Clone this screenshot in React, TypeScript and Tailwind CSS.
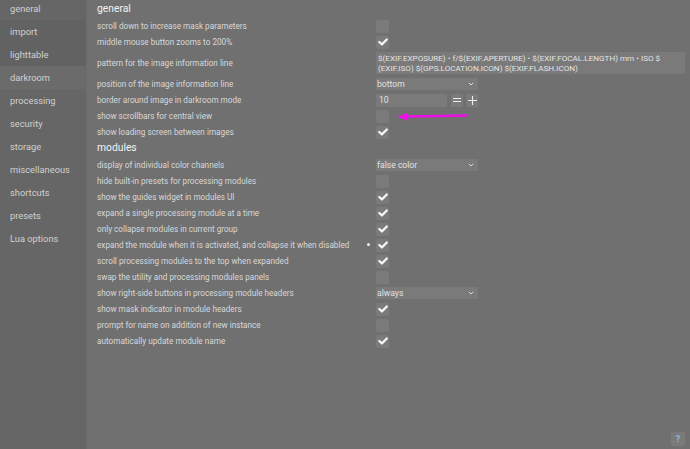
import React from "react";

const font = { fontFamily: "Roboto, 'Noto Sans', sans-serif" };

function Check({ on }: { on?: boolean }) {
  return (
    <div className="w-[13px] h-[13px] rounded-[2px] bg-[#7b7b7b] flex items-center justify-center">
      {on && (
        <svg width="10" height="8" viewBox="0 0 10 8">
          <path d="M1.3 4 L3.9 6.4 L8.8 1.5" stroke="#f6f6f6" strokeWidth="2.2" fill="none" strokeLinecap="round" strokeLinejoin="round" />
        </svg>
      )}
    </div>
  );
}

function Select({ value }: { value: string }) {
  return (
    <div className="w-[102px] h-[12px] bg-[#7a7a7a] flex items-center justify-between pl-[1px] pr-[4px] text-[8.6px] text-[#e2e2e2] leading-none">
      <span>{value}</span>
      <svg width="6" height="4" viewBox="0 0 6 4">
        <path d="M0.8 0.8 L3 3 L5.2 0.8" stroke="#dddddd" strokeWidth="1" fill="none" />
      </svg>
    </div>
  );
}

type Row = { label: string; ctrl: React.ReactNode; h?: string; dot?: boolean };

function SettingRow({ label, ctrl, h, dot }: Row) {
  return (
    <div className={`grid grid-cols-[279px_1fr] items-center ${h ?? "h-[16px]"}`}>
      <div className="text-[8.2px] text-[#d8d8d8] leading-none whitespace-nowrap relative">
        {label}
        {dot && <span className="absolute left-[270px] top-[2px] w-[3px] h-[3px] rounded-full bg-[#f2f2f2]" />}
      </div>
      <div className="flex items-center">{ctrl}</div>
    </div>
  );
}

function Header({ text, h }: { text: string; h: string }) {
  return (
    <div className={`${h} flex items-center text-[10.3px] text-[#f3f3f3] leading-none`}>{text}</div>
  );
}

export default function App() {
  const side = [
    { t: "general", bg: "bg-[#666666]" },
    { t: "import", bg: "bg-[#626262]" },
    { t: "lighttable", bg: "bg-[#626262]" },
    { t: "darkroom", bg: "bg-[#6b6b6b]" },
    { t: "processing", bg: "" },
    { t: "security", bg: "" },
    { t: "storage", bg: "" },
    { t: "miscellaneous", bg: "" },
    { t: "shortcuts", bg: "" },
    { t: "presets", bg: "" },
    { t: "Lua options", bg: "" },
  ];

  const general: Row[] = [
    { label: "scroll down to increase mask parameters", ctrl: <Check /> },
    { label: "middle mouse button zooms to 200%", ctrl: <Check on /> },
    {
      label: "pattern for the image information line",
      h: "h-[26px]",
      ctrl: (
        <div className="w-[309px] h-[22px] bg-[#7a7a7a] text-[8.1px] text-[#e4e4e4] leading-[10.5px] px-[2px] flex items-center">
          <div className="whitespace-nowrap">
            $(EXIF.EXPOSURE) • f/$(EXIF.APERTURE) • $(EXIF.FOCAL.LENGTH) mm • ISO $
            <br />
            (EXIF.ISO) $(GPS.LOCATION.ICON) $(EXIF.FLASH.ICON)
          </div>
        </div>
      ),
    },
    { label: "position of the image information line", ctrl: <Select value="bottom" /> },
    {
      label: "border around image in darkroom mode",
      ctrl: (
        <div className="flex items-center">
          <div className="w-[71px] h-[13px] bg-[#7a7a7a] text-[8.6px] text-[#e2e2e2] leading-none flex items-center pl-[3px]">10</div>
          <div className="ml-[4px] w-[12px] h-[13px] bg-[#7a7a7a] flex items-center justify-center">
            <svg width="8" height="6" viewBox="0 0 8 6">
              <path d="M0 1.5 H8 M0 4.5 H8" stroke="#ededed" strokeWidth="1.2" />
            </svg>
          </div>
          <div className="ml-[3px] w-[12px] h-[13px] bg-[#7a7a7a] flex items-center justify-center">
            <svg width="9" height="9" viewBox="0 0 9 9">
              <path d="M0 4.5 H9 M4.5 0 V9" stroke="#ededed" strokeWidth="1.1" />
            </svg>
          </div>
        </div>
      ),
    },
    {
      label: "show scrollbars for central view",
      ctrl: (
        <div className="relative">
          <Check />
          <svg className="absolute left-[20px] top-[1px]" width="74" height="11" viewBox="0 0 74 11">
            <path d="M12 5.5 L71 4.5" stroke="#ee10e6" strokeWidth="2.4" strokeLinecap="round" />
            <path d="M1.5 5.8 L12 1.5 L12 10 Z" fill="#ee10e6" />
          </svg>
        </div>
      ),
    },
    { label: "show loading screen between images", ctrl: <Check on /> },
  ];

  const modules: Row[] = [
    { label: "display of individual color channels", ctrl: <Select value="false color" /> },
    { label: "hide built-in presets for processing modules", ctrl: <Check /> },
    { label: "show the guides widget in modules UI", ctrl: <Check on /> },
    { label: "expand a single processing module at a time", ctrl: <Check on /> },
    { label: "only collapse modules in current group", ctrl: <Check on /> },
    { label: "expand the module when it is activated, and collapse it when disabled", ctrl: <Check on />, dot: true },
    { label: "scroll processing modules to the top when expanded", ctrl: <Check on /> },
    { label: "swap the utility and processing modules panels", ctrl: <Check /> },
    { label: "show right-side buttons in processing module headers", ctrl: <Select value="always" /> },
    { label: "show mask indicator in module headers", ctrl: <Check on /> },
    { label: "prompt for name on addition of new instance", ctrl: <Check /> },
    { label: "automatically update module name", ctrl: <Check on /> },
  ];

  return (
    <div style={font} className="w-[690px] h-[449px] flex bg-[#707070] overflow-hidden relative">
      <div className="w-[86px] h-full bg-[#666666] flex flex-col overflow-hidden">
        <div className="-mt-[3px] flex flex-col">
          {side.map((s) => (
            <div key={s.t} className={`h-[23px] flex items-center pl-[10px] text-[9.3px] text-[#d0d0d0] leading-none ${s.bg}`}>
              {s.t}
            </div>
          ))}
        </div>
      </div>
      <div className="w-[1px] h-full bg-[#6b6b6b]" />
      <div className="flex-1 pl-[10px] flex flex-col">
        <Header text="general" h="h-[18px]" />
        {general.map((r) => (
          <SettingRow key={r.label} {...r} />
        ))}
        <Header text="modules" h="h-[17px]" />
        {modules.map((r) => (
          <SettingRow key={r.label} {...r} />
        ))}
      </div>
      <div className="absolute left-[671px] top-[432px] w-[14px] h-[14px] rounded-[2px] bg-[#7a7a7a] flex items-center justify-center text-[9px] font-bold text-[#8fb3d6] leading-none">
        ?
      </div>
    </div>
  );
}
